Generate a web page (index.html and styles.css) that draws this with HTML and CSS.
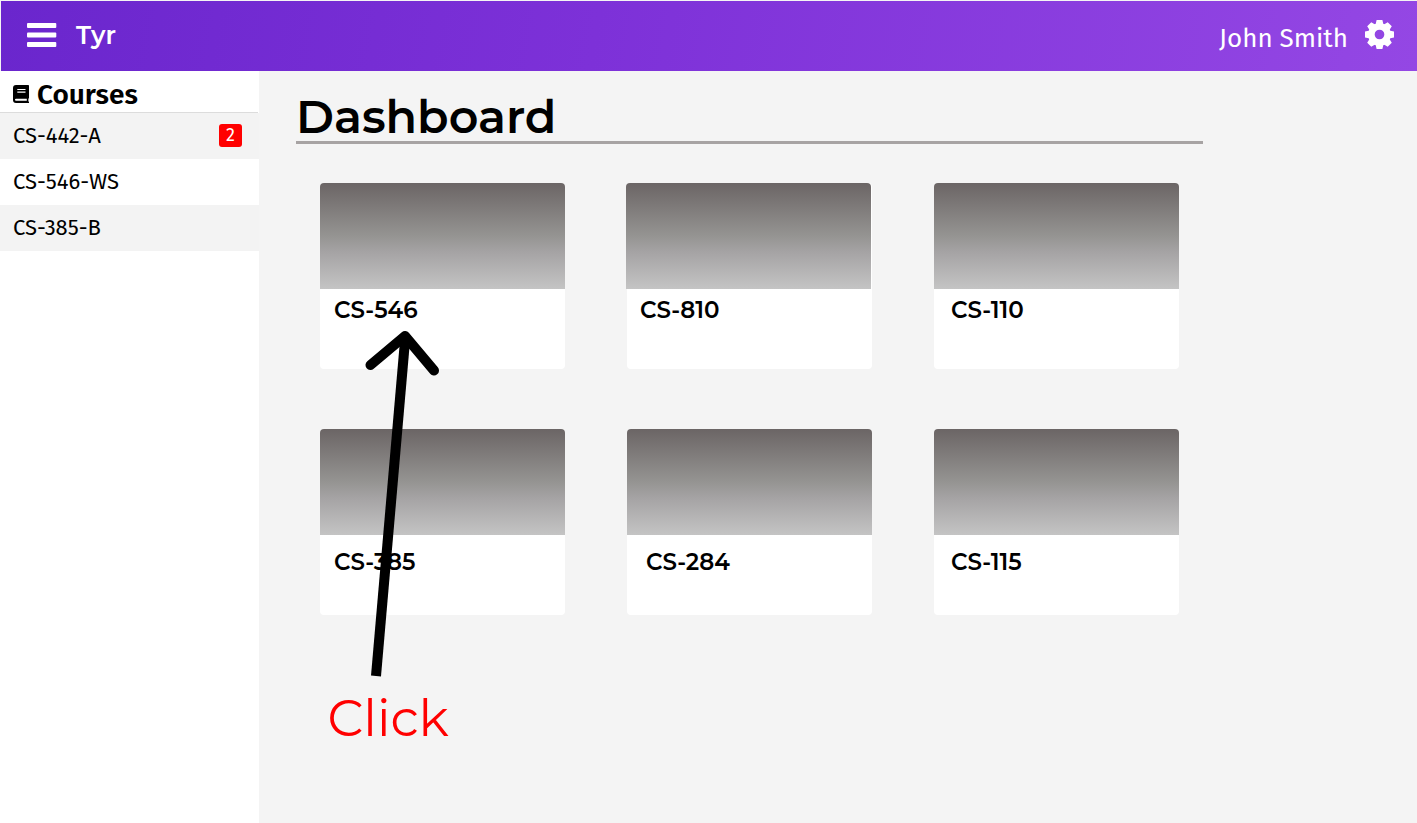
FILE: index.html
```html
<!DOCTYPE html>
<html lang="en">
<head>
<meta charset="utf-8">
<title>Tyr</title>
<link rel="stylesheet" href="styles.css">
</head>
<body>
<header class="topbar">
  <svg class="menu" viewBox="0 0 30 26"><g fill="#fff"><rect x="0" y="1" width="29.300" height="5" rx="1"/><rect x="0" y="10.500" width="29.300" height="5" rx="1"/><rect x="0" y="20" width="29.300" height="5" rx="1"/></g></svg>
  <span class="brand">Tyr</span>
  <span class="user">John Smith</span>
  <svg class="gear" viewBox="-12 -12 24 24"><circle r="6.700" fill="none" stroke="#fff" stroke-width="5.400"/><g fill="#fff"><path id="teeth" d="M-2.400-12h4.800l.9 4h-6.600zM-2.400 12h4.800l.9-4h-6.600zM-12-2.400v4.800l4 .9v-6.600zM12-2.400v4.800l-4 .9v-6.600z"/><use href="#teeth" transform="rotate(45)"/></g></svg>
</header>
<div class="layout">
  <nav class="sidebar">
    <h2 class="heading">
      <svg class="book" viewBox="0 0 16 18"><path fill="#000" fill-rule="evenodd" d="M3 0h12.200q.8 0 .8.800v12q0 .5-.5.800-.4 1.500 0 2.800.5.200.5.700v.9H3q-3 0-3-3V3q0-3 3-3zM4.300 4v1.100h8.200V4zm0 2.600v1.100h8.200V6.600zM3 13.700q-1 0-1 1t1 1.100h10.800v-2.100z"/></svg>
      <span class="label">Courses</span>
    </h2>
    <ul class="courses">
      <li class="course"><span>CS-442-A</span><span class="badge">2</span></li>
      <li class="course"><span>CS-546-WS</span></li>
      <li class="course"><span>CS-385-B</span></li>
    </ul>
  </nav>
  <main class="main">
    <h1 class="title">Dashboard</h1>
    <div class="cards">
      <article class="card"><div class="cover"></div><h3 class="name">CS-546</h3></article>
      <article class="card"><div class="cover shifted"></div><h3 class="name near">CS-810</h3></article>
      <article class="card"><div class="cover"></div><h3 class="name indent">CS-110</h3></article>
      <article class="card low"><div class="cover"></div><h3 class="name">CS-385</h3></article>
      <article class="card low"><div class="cover"></div><h3 class="name wide">CS-284</h3></article>
      <article class="card low"><div class="cover"></div><h3 class="name indent">CS-115</h3></article>
    </div>
  </main>
</div>
<svg class="arrow" viewBox="0 0 80 352"><g fill="none" stroke="#000" stroke-width="10"><path d="M40.500 10 11 351"/><path d="M5.500 40 40 11 69 45.500" stroke-linecap="round" stroke-linejoin="round"/></g></svg>
<span class="click">Click</span>
</body>
</html>
```
FILE: styles.css
```css
* { box-sizing: border-box; }
body { margin: 0; width: 1417px; height: 823px; overflow: hidden; position: relative; background: #f4f4f4; color: #000; font-family: "Fira Sans", "Noto Sans", sans-serif; display: flex; flex-direction: column; }
h1, h2, h3, ul { margin: 0; padding: 0; }
.topbar { height: 70px; margin: 1px 0 0 1px; padding-left: 26px; padding-right: 23px; display: flex; align-items: center; flex: none; color: #fff; background: linear-gradient(100deg, #6a26cd, #7d31d8 42%, #9447e4); }
.menu { width: 30px; height: 26px; margin-bottom: 2px; }
.brand { margin-left: 19px; font: 600 25px/30px "Montserrat", "Inter", sans-serif; margin-bottom: 3px; }
.user { margin-left: auto; font-size: 26px; line-height: 34px; font-weight: 400; margin-top: 5px; }
.gear { width: 29px; height: 29px; margin-left: 17px; margin-bottom: 3px; }
.layout { display: flex; flex: 1; }
.sidebar { width: 259px; background: #fff; }
.heading { height: 42px; width: 258px; padding: 5px 0 0 13px; display: flex; align-items: center; gap: 8px; border-bottom: 1px solid #dcdcdc; font-size: 28px; line-height: 36px; font-weight: 600; }
.label { padding-top: 1px; }
.book { width: 16px; height: 18px; }
.courses { list-style: none; }
.course { height: 46px; padding: 0 17px 2px 13px; display: flex; align-items: center; justify-content: space-between; font-size: 22px; }
.course:nth-child(odd) { background: #f3f3f3; }
.badge { width: 23px; height: 23px; border-radius: 3px; background: #f00; color: #fff; font-size: 18px; line-height: 23px; text-align: center; }
.main { padding: 21px 0 0 37px; }
.title { width: 907px; height: 52px; border-bottom: 3px solid #a7a3a3; font: 600 46px/50px "Montserrat", "Inter", sans-serif; }
.cards { display: grid; grid-template-columns: repeat(3, 245px); gap: 60px 62px; padding: 39px 0 0 24px; }
.card { height: 186px; border-radius: 4px; background: #fff; }
.cover { height: 106px; border-radius: 4px 4px 0 0; background: linear-gradient(#6b6565, #959492 50%, #a5a3a4 65%, #c4c4c4); }
.shifted { margin-left: -1px; margin-right: 1px; }
.name { padding: 6px 0 0 14px; font: 600 23px/30px "Montserrat", "Inter", sans-serif; }
.near { padding-left: 13px; }
.indent { padding-left: 17px; }
.low .name { padding-top: 12px; }
.low .wide { padding-left: 19px; }
.arrow { position: absolute; left: 365px; top: 325px; width: 80px; height: 352px; }
.click { position: absolute; left: 327.5px; top: 688px; color: #f00; font: 400 50.500px/61px "Montserrat", "Inter", sans-serif; }
```
